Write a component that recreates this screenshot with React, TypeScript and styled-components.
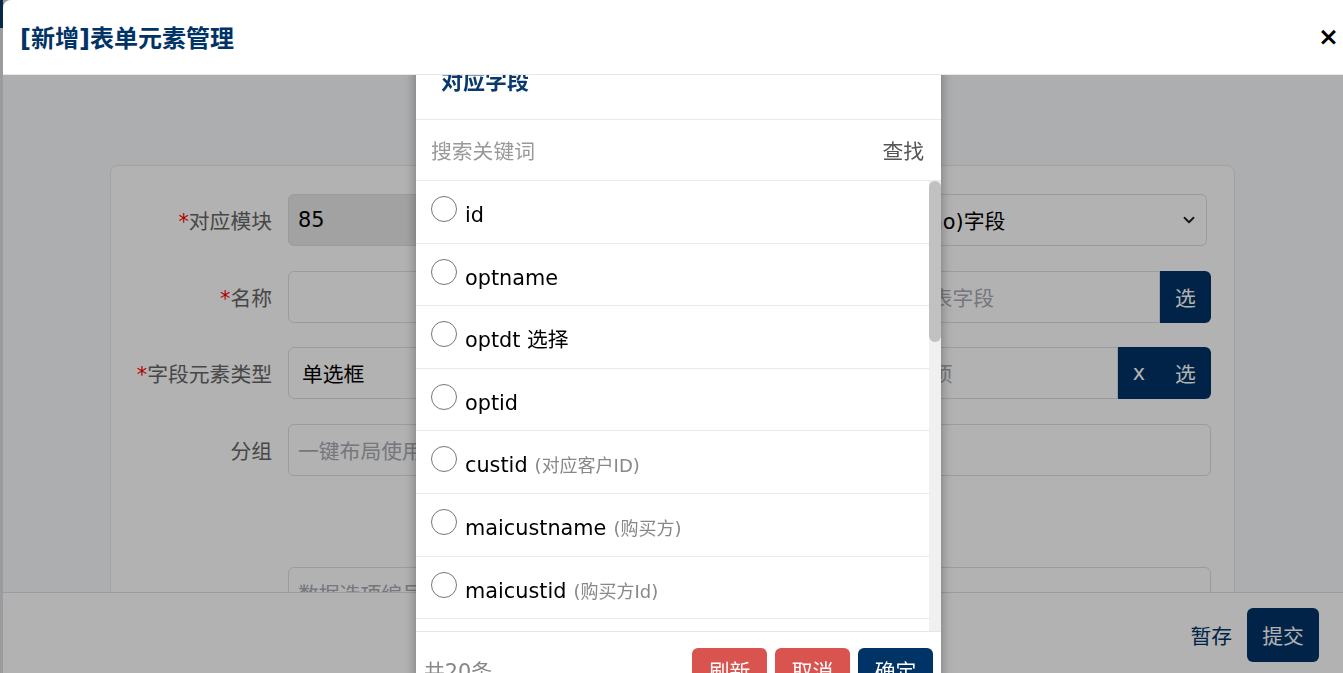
import React from "react";
import styled, { createGlobalStyle } from "styled-components";
import { ChevronDown } from "lucide-react";

const GlobalStyle = createGlobalStyle`
  html, body {
    margin: 0;
    padding: 0;
    height: 100%;
    overflow: hidden;
  }
  body {
    font-family: "DejaVu Sans", "Noto Sans CJK SC", sans-serif;
    background: #dcdfe3;
  }
  #root {
    height: 100%;
  }
  * {
    box-sizing: border-box;
  }
`;

interface Field {
  name: string;
  hint?: string;
}

const fields: Field[] = [
  { name: "id" },
  { name: "optname" },
  { name: "optdt 选择" },
  { name: "optid" },
  { name: "custid", hint: "对应客户ID" },
  { name: "maicustname", hint: "购买方" },
  { name: "maicustid", hint: "购买方Id" },
  { name: "maicusttel", hint: "购买方电话" },
  { name: "maicustaddr", hint: "购买方地址" },
  { name: "num", hint: "数量" },
  { name: "price", hint: "单价" },
  { name: "money", hint: "金额" },
  { name: "ratemoney", hint: "税额" },
  { name: "explain", hint: "说明" },
  { name: "status", hint: "状态" },
  { name: "isturn", hint: "是否提交" },
  { name: "comid", hint: "单位ID" },
  { name: "createdt", hint: "创建时间" },
  { name: "updatedt", hint: "更新时间" },
  { name: "uid", hint: "用户ID" },
];

const App = () => {
  return (
    <>
      <GlobalStyle />
      <Shell>
        <SideStrip />
        <Drawer>
          <Header>
            <Title>[新增]表单元素管理</Title>
            <Close>×</Close>
          </Header>
          <Body>
            <Card>
              <FormGrid>
                <FormItem>
                  <Label><Star>*</Star>对应模块</Label>
                  <Input $disabled>85</Input>
                </FormItem>
                <FormItem>
                  <Label>来源</Label>
                  <Select $trim>
                    <span>对应表 (no)字段</span>
                    <ChevronDown size={18} strokeWidth={2.5} color="#222" />
                  </Select>
                </FormItem>

                <FormItem>
                  <Label><Star>*</Star>名称</Label>
                  <Input />
                </FormItem>
                <FormItem>
                  <Label>对应字段</Label>
                  <Group>
                    <Input $joined><Placeholder>选择对应表字段</Placeholder></Input>
                    <AddonButton $last>选</AddonButton>
                  </Group>
                </FormItem>

                <FormItem>
                  <Label><Star>*</Star>字段元素类型</Label>
                  <Select>
                    <span>单选框</span>
                    <ChevronDown size={18} strokeWidth={2.5} color="#222" />
                  </Select>
                </FormItem>
                <FormItem>
                  <Label>数据选项</Label>
                  <Group>
                    <Input $joined><Placeholder>请选择选项</Placeholder></Input>
                    <AddonButton $small>x</AddonButton>
                    <AddonButton $last>选</AddonButton>
                  </Group>
                </FormItem>

                <FormItem>
                  <Label>分组</Label>
                  <Input><Placeholder>一键布局使用的分组名</Placeholder></Input>
                </FormItem>
                <FormItem>
                  <Label>排序</Label>
                  <Input />
                </FormItem>

                <Spacer />

                <FormItem>
                  <Label />
                  <Input><Placeholder>数据选项编号或SQL</Placeholder></Input>
                </FormItem>
                <FormItem>
                  <Label />
                  <Input />
                </FormItem>
              </FormGrid>
            </Card>
          </Body>
          <Footer>
            <TextButton>暂存</TextButton>
            <SubmitButton>提交</SubmitButton>
          </Footer>
        </Drawer>
      </Shell>

      <Overlay />

      <Modal>
        <ModalTitle>对应字段</ModalTitle>
        <SearchRow>
          <SearchHint>搜索关键词</SearchHint>
          <SearchButton>查找</SearchButton>
        </SearchRow>
        <ListArea>
          <List>
            {fields.map((f) => (
              <Item key={f.name}>
                <Radio />
                {f.name}
                {f.hint && <Hint>({f.hint})</Hint>}
              </Item>
            ))}
          </List>
          <ScrollTrack>
            <ScrollThumb />
          </ScrollTrack>
        </ListArea>
        <ModalFooter>
          <Count>共20条</Count>
          <Buttons>
            <ActionButton $tone="red">刷新</ActionButton>
            <ActionButton $tone="red">取消</ActionButton>
            <ActionButton $tone="navy">确定</ActionButton>
          </Buttons>
        </ModalFooter>
      </Modal>
    </>
  );
};

const Shell = styled.div`
  display: flex;
  height: 100vh;
`;

const SideStrip = styled.div`
  width: 3px;
  flex-shrink: 0;
  background: linear-gradient(#0b3a6a 0 28px, #dcdfe3 28px);
`;

const Drawer = styled.div`
  flex: 1;
  min-width: 0;
  display: flex;
  flex-direction: column;
  background: #f7f9fb;
  border-top-left-radius: 8px;
`;

const Header = styled.div`
  position: relative;
  z-index: 20;
  height: 75px;
  flex-shrink: 0;
  display: flex;
  align-items: center;
  justify-content: space-between;
  padding: 0 4px 2px 17px;
  background: #fff;
  border-bottom: 1px solid #e6e8eb;
  border-top-left-radius: 8px;
`;

const Title = styled.h1`
  margin: 0;
  font-size: 24px;
  font-weight: 700;
  color: #003366;
`;

const Close = styled.span`
  font-family: "DejaVu Sans", sans-serif;
  font-size: 25px;
  font-weight: 700;
  color: #000;
  line-height: 1;
`;

const Body = styled.div`
  flex: 1;
  min-height: 0;
  overflow: hidden;
  padding: 90px 108px 0 107px;
`;

const Card = styled.div`
  background: #fff;
  border: 1px solid #e4e7ed;
  border-radius: 8px;
  padding: 28px 23px 60px;
`;

const FormGrid = styled.div`
  display: grid;
  grid-template-columns: 1fr 1fr;
  column-gap: 24px;
  row-gap: 24.7px;
`;

const FormItem = styled.div`
  display: grid;
  grid-template-columns: 138px 1fr;
  column-gap: 16px;
  align-items: center;
`;

const Spacer = styled.div`
  grid-column: 1 / -1;
  height: 42px;
`;

const Label = styled.label`
  text-align: right;
  font-size: 20.8px;
  color: #666;
  white-space: nowrap;
`;

const Star = styled.span`
  color: #ff0000;
`;

const Input = styled.div<{ $disabled?: boolean; $joined?: boolean }>`
  flex: 1;
  height: 52px;
  display: flex;
  align-items: center;
  padding: 0 9px;
  font-size: 20.8px;
  color: #000;
  white-space: nowrap;
  overflow: hidden;
  background: ${(p) => (p.$disabled ? "#e9e9e9" : "#fff")};
  border: 1px solid #dcdfe6;
  border-radius: ${(p) => (p.$joined ? "6px 0 0 6px" : "6px")};
`;

const Select = styled(Input)<{ $trim?: boolean }>`
  justify-content: space-between;
  padding: 0 8px 0 13px;
  margin-right: ${(p) => (p.$trim ? "4px" : "0")};
`;

const Placeholder = styled.span`
  color: #a8abb2;
`;

const Group = styled.div`
  display: flex;
`;

const AddonButton = styled.div<{ $small?: boolean; $last?: boolean }>`
  width: ${(p) => (p.$small ? "42px" : "51px")};
  height: 52px;
  flex-shrink: 0;
  display: flex;
  align-items: center;
  justify-content: center;
  background: #003366;
  color: #fff;
  font-size: 20.8px;
  border-radius: ${(p) => (p.$last ? "0 6px 6px 0" : "0")};
`;

const Footer = styled.div`
  height: 81px;
  flex-shrink: 0;
  display: flex;
  justify-content: flex-end;
  align-items: flex-start;
  gap: 15px;
  padding: 15px 24px 0 0;
  background: #fff;
  border-top: 1px solid #dcdfe6;
`;

const TextButton = styled.span`
  height: 54px;
  display: flex;
  align-items: center;
  font-size: 20.8px;
  color: #003366;
`;

const SubmitButton = styled.div`
  width: 72px;
  height: 54px;
  display: flex;
  align-items: center;
  justify-content: center;
  background: #003366;
  color: #fff;
  font-size: 20.8px;
  border-radius: 6px;
`;

const Overlay = styled.div`
  position: fixed;
  inset: 0;
  z-index: 10;
  background: rgba(0, 0, 0, 0.3);
`;

const Modal = styled.div`
  position: fixed;
  left: 416px;
  top: 44px;
  width: 525px;
  z-index: 15;
  display: flex;
  flex-direction: column;
  background: #fff;
  box-shadow: 0 0 12px rgba(0, 0, 0, 0.35);
`;

const ModalTitle = styled.div`
  height: 76px;
  display: flex;
  align-items: center;
  padding: 0 0 6px 25px;
  font-size: 22px;
  font-weight: 700;
  color: #0a3a6b;
  border-bottom: 1px solid #e6e9ee;
`;

const SearchRow = styled.div`
  height: 61px;
  display: flex;
  align-items: center;
  justify-content: space-between;
  padding: 0 17px 0 15px;
  font-size: 20.8px;
  border-bottom: 1px solid #e6e9ee;
`;

const SearchHint = styled.span`
  color: #999;
`;

const SearchButton = styled.span`
  color: #555;
`;

const ListArea = styled.div`
  height: 451px;
  display: flex;
  border-bottom: 1px solid #e3e5e8;
`;

const List = styled.div`
  flex: 1;
  min-width: 0;
  overflow: hidden;
`;

const ScrollTrack = styled.div`
  width: 12px;
  flex-shrink: 0;
  background: #f0f0f0;
`;

const ScrollThumb = styled.div`
  height: 161px;
  background: #c1c1c1;
  border-radius: 6px;
`;

const Item = styled.div`
  height: 62.6px;
  overflow: hidden;
  padding: 15px 15px 0;
  font-size: 20.8px;
  line-height: 32px;
  color: #000;
  white-space: nowrap;
  border-bottom: 1px solid #e6e9ee;
`;

const Radio = styled.span`
  display: inline-block;
  width: 26px;
  height: 26px;
  margin-right: 8px;
  border: 1.5px solid #767676;
  border-radius: 50%;
  background: #fff;
`;

const Hint = styled.span`
  margin-left: 7px;
  font-size: 18px;
  color: #888;
`;

const ModalFooter = styled.div`
  display: flex;
  align-items: center;
  justify-content: space-between;
  padding: 16px 8px;
`;

const Count = styled.span`
  font-size: 20.8px;
  color: #888;
`;

const Buttons = styled.div`
  display: flex;
  gap: 8px;
`;

const ActionButton = styled.div<{ $tone: "red" | "navy" }>`
  width: 75px;
  height: 44px;
  display: flex;
  align-items: center;
  justify-content: center;
  border-radius: 6px;
  font-size: 20.8px;
  color: #fff;
  background: ${(p) => (p.$tone === "red" ? "#d9534f" : "#003366")};
`;

export default App;
